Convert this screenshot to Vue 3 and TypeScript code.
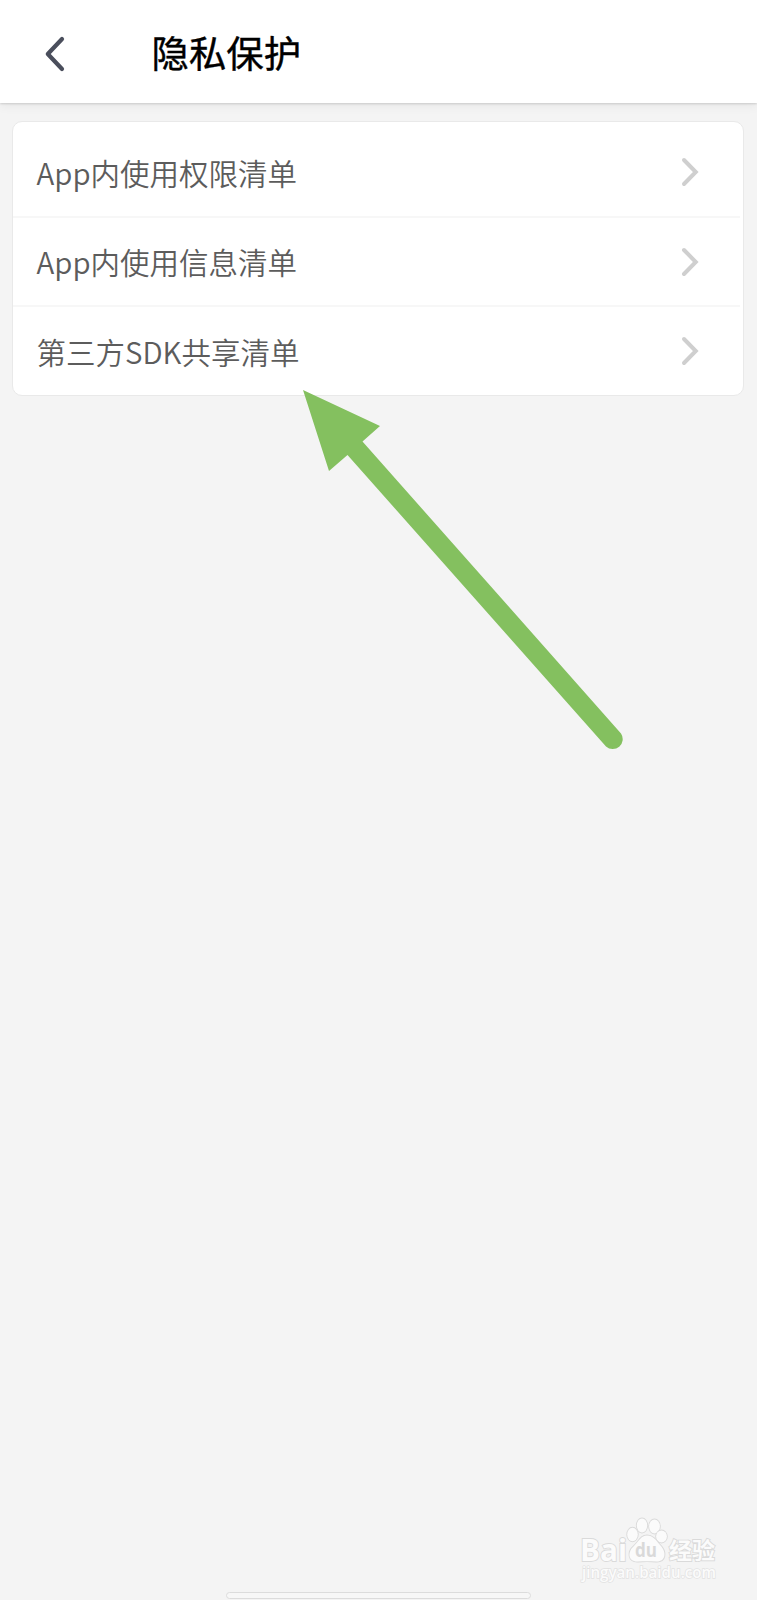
<script setup lang="ts">
const items: string[] = ['App内使用权限清单', 'App内使用信息清单', '第三方SDK共享清单']
</script>

<template>
  <div class="screen">
    <header class="bar">
      <svg class="back" width="22" height="36" viewBox="0 0 22 36">
        <path d="M18 3 L3.8 18 L18 33" fill="none" stroke="#4a4e5c" stroke-width="4.2" stroke-linecap="round" stroke-linejoin="round" />
      </svg>
      <h1 class="title">隐私保护</h1>
    </header>

    <main class="list">
      <div v-for="item in items" :key="item" class="row">
        <span class="label">{{ item }}</span>
        <svg class="chevron" width="18" height="30" viewBox="0 0 18 30">
          <path d="M3 3 L14.8 15 L3 27" fill="none" stroke="#cfcfcf" stroke-width="4" stroke-linecap="round" stroke-linejoin="miter" />
        </svg>
      </div>
    </main>

    <svg class="arrow" width="324" height="364" viewBox="0 0 324 364">
      <path d="M0 0 L77 36 L59.5 51.5 L318 343.5 A10 10 0 0 1 303 356.5 L44.5 65 L26 81 Z" fill="#84c05f" />
    </svg>

    <svg class="watermark" width="150" height="74" viewBox="0 0 150 74">
      <g fill="#fbfbfb" stroke="#dadada" stroke-width="1.8" paint-order="stroke">
        <text x="3" y="46.500" class="brand" textLength="47" lengthAdjust="spacingAndGlyphs">Bai</text>
        <ellipse cx="55.5" cy="20.5" rx="5.3" ry="6.8" />
        <ellipse cx="65" cy="11.500" rx="5.2" ry="7" />
        <ellipse cx="77.5" cy="12.5" rx="5.4" ry="7" />
        <ellipse cx="84.5" cy="22.5" rx="5.4" ry="6" />
        <path d="M70 21.5 C76 21.500 79 26 83 31 C90 38 89 48 79 47.500 C73 47 67 47 61 47.500 C51 48 50 38 57 32 C62 27 64 21.500 70 21.500 Z" />
        <text x="92" y="45" class="cn" textLength="46">经验</text>
      </g>
      <text x="58" y="43" class="du" textLength="22" lengthAdjust="spacingAndGlyphs">du</text>
      <text x="5" y="64" class="url" textLength="134" lengthAdjust="spacingAndGlyphs">jingyan.baidu.com</text>
    </svg>

    <div class="home"></div>
  </div>
</template>

<style>
body {
  background: #f4f4f4;
}
</style>

<style scoped>
.screen {
  position: relative;
  box-sizing: border-box;
  width: 757px;
  height: 1600px;
  overflow: hidden;
  background: #f4f4f4;
  font-family: "Noto Sans CJK SC", sans-serif;
}
.bar {
  display: flex;
  align-items: center;
  box-sizing: border-box;
  height: 103px;
  padding: 4px 0 0 44px;
  background: #fff;
  box-shadow: 0 1px 2px rgba(0, 0, 0, 0.14), 0 3px 10px rgba(0, 0, 0, 0.06);
}
.back {
  display: block;
}
.title {
  margin: -4px 0 0 85.5px;
  font-size: 37.4px;
  line-height: 54px;
  font-weight: 400;
  color: #000;
  -webkit-text-stroke: 0.4px #000;
}
.list {
  margin: 18px 13px 0 12px;
  box-sizing: border-box;
  height: 275px;
  background: #fff;
  border: 1px solid #e9e9e9;
  border-radius: 10px;
  padding-top: 6px;
}
.row {
  display: flex;
  align-items: center;
  justify-content: space-between;
  box-sizing: border-box;
  height: 89.5px;
  margin-right: 3px;
  padding: 0 41px 0 23.5px;
  border-bottom: 2px solid #f7f7f7;
}
.row:last-child {
  border-bottom-color: transparent;
}
.label {
  font-size: 29.5px;
  line-height: 44px;
  font-weight: 350;
  color: #5c5c5c;
}
.chevron {
  display: block;
  margin-top: 1px;
}
.arrow {
  position: absolute;
  left: 303px;
  top: 390px;
}
.watermark {
  position: absolute;
  left: 577px;
  top: 1514px;
}
.brand {
  font: 700 30px "Open Sans", sans-serif;
}
.cn {
  font: 700 23px "Noto Sans CJK SC", sans-serif;
}
.du {
  font: 700 20px "Open Sans", sans-serif;
  fill: #d9d9d9;
}
.url {
  font: 600 15.5px "Open Sans", sans-serif;
  fill: #fbfbfb;
  stroke: #e2e2e2;
  stroke-width: 1.4px;
  paint-order: stroke;
}
.home {
  position: absolute;
  left: 226px;
  top: 1592px;
  width: 305px;
  height: 7px;
  box-sizing: border-box;
  background: #f7f7f7;
  border: 1px solid #dcdcdc;
  border-radius: 4px;
}
</style>
